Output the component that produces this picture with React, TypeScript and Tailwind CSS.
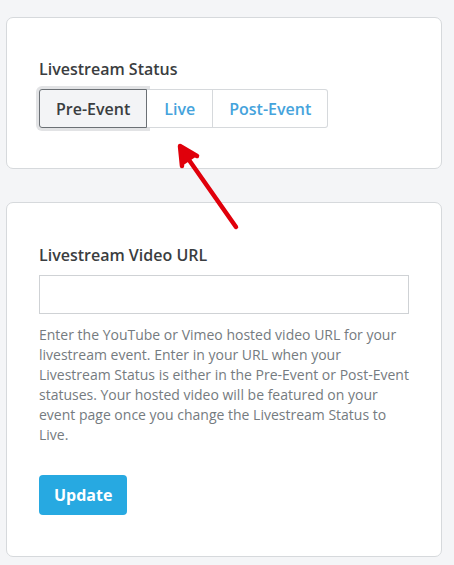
import React, { useState } from 'react'

const statuses = ["Pre-Event", "Live", "Post-Event"]

const App = () => {
    const [active, setActive] = useState("Pre-Event")
    const [url, setUrl] = useState("")

    return (
        <div className="relative min-h-[565px] w-[454px] bg-[#f4f5f7] pt-[17px] pl-[6px] pr-[12px] text-[#333]" style={{ fontFamily: '"Open Sans", sans-serif' }}>
            <section className="rounded-[7px] border border-[#d6d9dc] bg-white px-[32px] pt-[39px] pb-[40px]">
                <h3 className="text-[16px] font-semibold leading-[24px] text-[#3a3d40]">Livestream Status</h3>
                <div className="mt-[8px] flex">
                    {statuses.map((each, i) => (
                        <button
                            key={each}
                            onClick={() => setActive(each)}
                            className={
                                active === each
                                    ? "h-[39px] rounded-l-[3px] border border-[#6b7075] bg-[#f3f4f6] px-[16px] text-[16px] font-semibold text-[#3a3d40] shadow-[0_0_0_3px_#e2e3e5]"
                                    : i === statuses.length - 1
                                        ? "h-[39px] rounded-r-[3px] border border-l-0 border-[#d6d9dc] bg-white px-[16px] text-[16px] font-semibold text-[#45a3dc]"
                                        : "h-[39px] border border-l-0 border-[#d6d9dc] bg-white px-[17px] text-[16px] font-semibold text-[#45a3dc]"
                            }
                        >
                            {each}
                        </button>
                    ))}
                </div>
            </section>

            <section className="mt-[33px] rounded-[7px] border border-[#d6d9dc] bg-white px-[32px] pt-[40px] pb-[41px]">
                <h3 className="text-[16px] font-semibold leading-[24px] text-[#3a3d40]">Livestream Video URL</h3>
                <input
                    value={url}
                    onChange={(e) => setUrl(e.target.value)}
                    className="mt-[8px] h-[39px] w-full border border-[#cfd2d5] bg-white px-3 text-[14px] outline-none"
                />
                <p className="mt-[11px] text-[14px] leading-[20px] text-[#757b80]">
                    Enter the YouTube or Vimeo hosted video URL for your livestream event. Enter in your URL when your Livestream Status is either in the Pre-Event or Post-Event statuses. Your hosted video will be featured on your event page once you change the Livestream Status to Live.
                </p>
                <button className="mt-[30px] h-[40px] rounded-[4px] bg-[#27a9e1] px-[15px] text-[16px] font-bold text-white">
                    Update
                </button>
            </section>

            {/* annotation arrow */}
            <svg className="pointer-events-none absolute left-0 top-0" width="454" height="565">
                <line x1="236" y1="227" x2="182" y2="150" stroke="#e0000b" strokeWidth="4.5" strokeLinecap="round" />
                <polyline points="182,166 180,146 197,156" fill="#e0000b" stroke="#e0000b" strokeWidth="4.5" strokeLinecap="round" strokeLinejoin="round" />
            </svg>
        </div>
    )
}

export default App
